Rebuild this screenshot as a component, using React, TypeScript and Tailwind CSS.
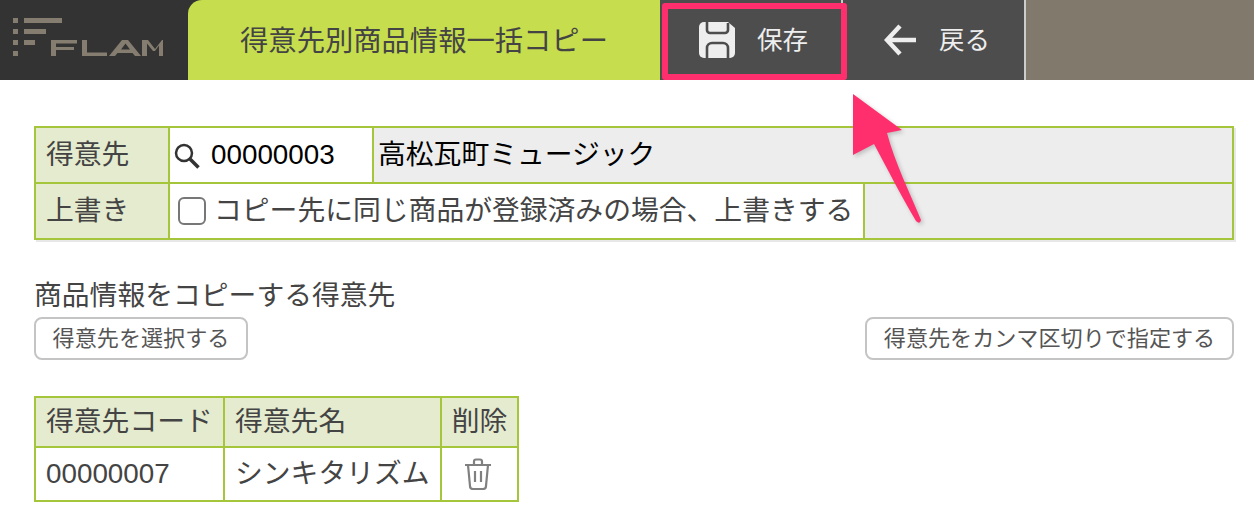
export default function App() {
  return (
    <div className="relative w-[1254px] h-[518px] overflow-hidden bg-white text-[#444] font-['Liberation_Sans','Noto_Sans_CJK_JP',sans-serif]">
      <header className="flex h-20 bg-[#333]">
        <div className="w-[188px] shrink-0">
          <svg width="188" height="80" viewBox="0 0 188 80">
            <g fill="#857d70">
              <rect x="13" y="18" width="5" height="5" />
              <rect x="13" y="29" width="5" height="5" />
              <rect x="13" y="40" width="5" height="5" />
              <rect x="13" y="51" width="5" height="5" />
              <rect x="24" y="18" width="38" height="5" />
              <rect x="24" y="29" width="22" height="5" />
              <rect x="24" y="40" width="11" height="5" />
              <path d="M51 40h26v3.500h-21v3.500h18v3h-18v6h-5z" />
              <path d="M82 40h5v12.500h20v3.500h-25z" />
              <path d="M122 40h6l13 16h-6l-2.500-3h-15l-2.500 3h-6zM121 49.500h9l-4.500-6z" fillRule="evenodd" />
              <path d="M142 56v-16h6l7 9 7-9h1v16h-4v-10.500l-4 5.500h-2l-6-7.500v12.500z" />
            </g>
          </svg>
        </div>
        <div className="w-[472px] shrink-0 bg-[#c6dd4e] rounded-tl-[14px] flex items-center justify-center pt-[3px] text-[28.300px] text-[#444]">
          得意先別商品情報一括コピー
        </div>
        <button className="w-[183px] shrink-0 bg-[#4d4d4d] flex items-center pl-[39px] gap-[22px] text-[25.500px] text-[#eee] border-r-2 border-[#ccc]">
          <svg width="36" height="36" viewBox="0 0 36 36" fill="none">
            <path d="M5 0h24l7 6v25a5 5 0 0 1-5 5H5a5 5 0 0 1-5-5V5a5 5 0 0 1 5-5z" fill="#eee" />
            <path d="M8 0v8a3 3 0 0 0 3 3h15a3 3 0 0 0 3-3V1M8 36V26a5 5 0 0 1 5-5h11a5 5 0 0 1 5 5v10" stroke="#4d4d4d" strokeWidth="2.600" />
          </svg>
          <span className="pt-[1px]">保存</span>
        </button>
        <button className="w-[183px] shrink-0 bg-[#4d4d4d] flex items-center pl-[41px] gap-[23px] text-[25.500px] text-[#eee] border-r-2 border-[#ccc]">
          <svg width="32" height="32" viewBox="0 0 32 32" fill="none" stroke="#eee" strokeWidth="4.500">
            <path d="M16 2 3 16l13 14M3 16h29" />
          </svg>
          <span className="pt-[1px]">戻る</span>
        </button>
        <div className="flex-1 bg-[#82796d]" />
      </header>

      <main className="pl-[34px] pr-[20px] pt-[46px]">
        <table className="w-[1200px] table-fixed border-collapse text-[27.800px] shadow-[2px_2px_0_#e8e8e8]">
          <colgroup>
            <col className="w-[134px]" />
            <col className="w-[204px]" />
            <col className="w-[491px]" />
            <col />
          </colgroup>
          <tbody>
            <tr className="h-[56px]">
              <td className="border-2 border-[#a5c63b] bg-[#e4ebce] pl-[10px]">得意先</td>
              <td className="border-2 border-[#a5c63b] pl-[2px] text-black">
                <span className="flex items-center gap-[10px]">
                  <svg width="29" height="29" viewBox="0 0 29 29" fill="none" stroke="#333" strokeWidth="2.500">
                    <circle cx="12" cy="12" r="8" />
                    <path d="m17.500 17.500 9 9" strokeWidth="3.500" />
                  </svg>
                  00000003
                </span>
              </td>
              <td colSpan={2} className="border-2 border-[#a5c63b] bg-[#ededed] pl-[4px] text-black">高松瓦町ミュージック</td>
            </tr>
            <tr className="h-[56px]">
              <td className="border-2 border-[#a5c63b] bg-[#e4ebce] pl-[10px]">上書き</td>
              <td colSpan={2} className="border-2 border-[#a5c63b] pl-[8px]">
                <span className="flex items-center gap-[8px] whitespace-nowrap">
                  <span className="w-[28px] h-[28px] rounded-[6px] border-2 border-[#777] bg-white shrink-0" />
                  コピー先に同じ商品が登録済みの場合、上書きする
                </span>
              </td>
              <td className="border-2 border-[#a5c63b] bg-[#ededed]" />
            </tr>
          </tbody>
        </table>

        <h2 className="mt-[37px] text-[27.800px] leading-[38px] font-normal">商品情報をコピーする得意先</h2>
        <div className="flex justify-between mt-[2px]">
          <button className="h-[43px] w-[214px] rounded-[8px] border-2 border-[#c4c4c4] text-[22.100px] text-[#555]">得意先を選択する</button>
          <button className="h-[43px] w-[369px] rounded-[8px] border-2 border-[#c4c4c4] text-[22.100px] text-[#555]">得意先をカンマ区切りで指定する</button>
        </div>

        <table className="mt-[36px] w-[485px] table-fixed border-collapse text-[27.800px]">
          <colgroup>
            <col className="w-[189px]" />
            <col className="w-[217px]" />
            <col />
          </colgroup>
          <tbody>
            <tr className="h-[50px] bg-[#e4ebce]">
              <td className="border-2 border-[#a5c63b] pl-[10px] whitespace-nowrap">得意先コード</td>
              <td className="border-2 border-[#a5c63b] pl-[10px]">得意先名</td>
              <td className="border-2 border-[#a5c63b] text-center">削除</td>
            </tr>
            <tr className="h-[54px]">
              <td className="border-2 border-[#a5c63b] pl-[10px]">00000007</td>
              <td className="border-2 border-[#a5c63b] pl-[10px] whitespace-nowrap">シンキタリズム</td>
              <td className="border-2 border-[#a5c63b]">
                <svg className="ml-[22px]" width="28" height="32" viewBox="0 0 28 32" fill="none" stroke="#808080" strokeWidth="2.200">
                  <path d="M1 7h26M10 7V3.500a2 2 0 0 1 2-2h4a2 2 0 0 1 2 2V7M4 7l2 21a3 3 0 0 0 3 3h10a3 3 0 0 0 3-3l2-21M11 13v11M17 13v11" />
                </svg>
              </td>
            </tr>
          </tbody>
        </table>
      </main>

      <div className="absolute left-[662px] top-[3px] w-[185px] h-[77px] border-[6px] border-[#ff2f6e] rounded-[3px]" />
      <svg className="absolute left-[845px] top-[88px]" width="90" height="145" viewBox="0 0 90 145">
        <path d="M8 6 57 42 42 45C50 75 65 105 76 132Q75 137 71 133C56 108 42 80 29 56L8 67Z" fill="#ff2f6e" style={{ filter: "drop-shadow(2px 2px 2px rgba(0,0,0,.2))" }} />
      </svg>
    </div>
  );
}
